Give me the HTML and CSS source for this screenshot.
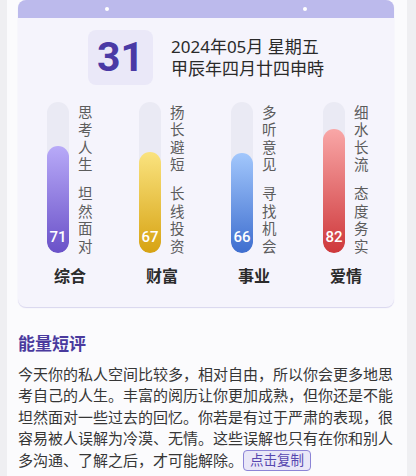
FILE: index.html
```html
<!DOCTYPE html>
<html lang="zh">
<head>
<meta charset="utf-8">
<link rel="stylesheet" href="styles.css">
</head>
<body>
<div class="page">
  <div class="card">
    <div class="card-top"><span class="dot"></span><span class="dot"></span></div>
    <div class="date-row">
      <div class="date-box">31</div>
      <div class="date-text">
        <div>2024年05月 星期五</div>
        <div>甲辰年四月廿四申時</div>
      </div>
    </div>
    <div class="bars">
      <div class="col">
        <div class="meter">
          <div class="bar"><div class="fill fill-purple" style="height:71%"><span class="num">71</span></div></div>
          <div class="words"><span>思考人生</span><span>坦然面对</span></div>
        </div>
        <div class="label">综合</div>
      </div>
      <div class="col">
        <div class="meter">
          <div class="bar"><div class="fill fill-yellow" style="height:67%"><span class="num">67</span></div></div>
          <div class="words"><span>扬长避短</span><span>长线投资</span></div>
        </div>
        <div class="label">财富</div>
      </div>
      <div class="col">
        <div class="meter">
          <div class="bar"><div class="fill fill-blue" style="height:66%"><span class="num">66</span></div></div>
          <div class="words"><span>多听意见</span><span>寻找机会</span></div>
        </div>
        <div class="label">事业</div>
      </div>
      <div class="col">
        <div class="meter">
          <div class="bar"><div class="fill fill-red" style="height:82%"><span class="num">82</span></div></div>
          <div class="words"><span>细水长流</span><span>态度务实</span></div>
        </div>
        <div class="label">爱情</div>
      </div>
    </div>
  </div>
  <h2 class="title">能量短评</h2>
  <p class="desc">今天你的私人空间比较多，相对自由，所以你会更多地思考自己的人生。丰富的阅历让你更加成熟，但你还是不能坦然面对一些过去的回忆。你若是有过于严肃的表现，很容易被人误解为冷漠、无情。这些误解也只有在你和别人<span class="last">多沟通、了解之后，才可能解除。<span class="copy">点击复制</span></span></p>
</div>
</body>
</html>
```
FILE: styles.css
```css
* { box-sizing: border-box; }
html, body { margin: 0; padding: 0; }
body {
  background: #efeff2;
  font-family: "Noto Sans", "Noto Sans CJK SC", sans-serif;
  width: 416px;
  height: 476px;
  overflow: hidden;
}
.page {
  margin-left: 7px;
  width: 400px;
  height: 476px;
  background: #fbfbfd;
  padding: 0 13px 0 11px;
  overflow: hidden;
}
.card {
  background: #f5f4fc;
  border-radius: 8px;
  box-shadow: 0 1px 1px #d8d5ee;
  padding-bottom: 20px;
}
.card-top {
  height: 18px;
  background: #bcbaec;
  border-radius: 8px 8px 0 0;
  display: flex;
  align-items: center;
  padding-left: 87px;
  gap: 194px;
}
.dot {
  width: 4px;
  height: 4px;
  border-radius: 50%;
  background: #ffffff;
}
.date-row {
  display: flex;
  align-items: center;
  margin-top: 12px;
  padding-left: 70px;
  gap: 18px;
}
.date-box {
  width: 65px;
  height: 55px;
  border-radius: 8px;
  background: #eae8f8;
  display: flex;
  align-items: center;
  justify-content: center;
  font-family: "Roboto", "Noto Sans", sans-serif;
  font-weight: 700;
  font-size: 41px;
  color: #4a3aa5;
  line-height: 1;
}
.date-text {
  font-size: 17px;
  line-height: 22px;
  color: #2a2a2a;
  margin-top: 1px;
}
.bars {
  display: flex;
  margin-top: 17px;
  padding-left: 29px;
}
.col {
  width: 92px;
  flex: none;
}
.meter {
  display: flex;
  width: 46px;
}
.bar {
  width: 22px;
  height: 151px;
  border-radius: 11px;
  background: #eaeaf4;
  display: flex;
  flex-direction: column;
  justify-content: flex-end;
  overflow: hidden;
}
.fill {
  border-radius: 11px;
  display: flex;
  flex-direction: column;
  justify-content: flex-end;
  align-items: center;
  padding-bottom: 7px;
}
.fill-purple { background: linear-gradient(#b8aaf8, #6a51c8); }
.fill-yellow { background: linear-gradient(#fae37f, #d7a313); }
.fill-blue { background: linear-gradient(#a2c7fc, #3e6ecf); }
.fill-red { background: linear-gradient(#f9a7a7, #ce383b); }
.num {
  color: #fff;
  font-family: "Roboto", "Noto Sans", sans-serif;
  font-weight: 500;
  font-size: 15px;
  line-height: 18px;
}
.words {
  margin-left: 9px;
  margin-top: 2px;
  height: 151px;
  width: 15px;
  display: flex;
  flex-direction: column;
  justify-content: space-between;
  font-size: 14.5px;
  line-height: 17.4px;
  color: #5c5c5c;
}
.words span { display: block; width: 15px; }
.label {
  width: 46px;
  text-align: center;
  margin-top: 10px;
  font-size: 16px;
  line-height: 22px;
  font-weight: 700;
  color: #2b2b2b;
  white-space: nowrap;
}
.title {
  margin: 25px 0 0;
  font-size: 17px;
  line-height: 24px;
  font-weight: 700;
  color: #4a3a9e;
}
.desc {
  margin: 8px 0 0;
  width: 376px;
  font-size: 15px;
  line-height: 21.3px;
  color: #363636;
}
.last {
  display: inline-flex;
  align-items: center;
  margin-top: 1px;
}
.copy {
  display: inline-block;
  padding: 0 6px;
  height: 21px;
  line-height: 19px;
  font-size: 13.5px;
  color: #5747b0;
  background: #e9e7f8;
  border: 1px solid #8c84d6;
  border-radius: 4px;
}
```
